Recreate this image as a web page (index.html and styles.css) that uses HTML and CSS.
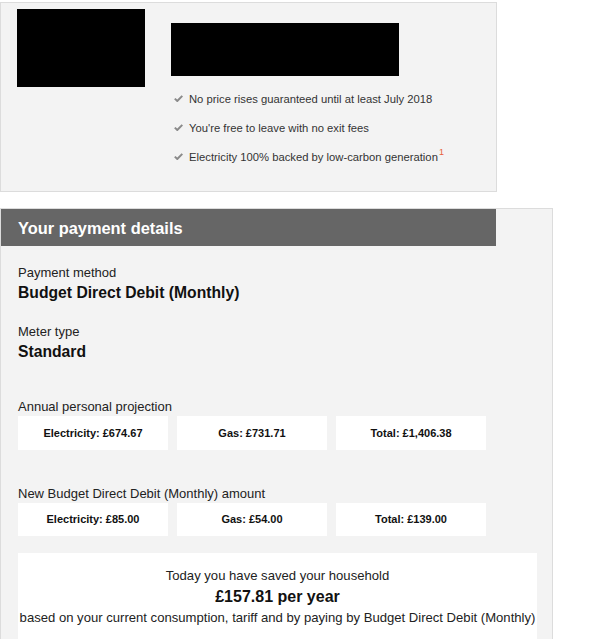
FILE: index.html
```html
<!DOCTYPE html>
<html lang="en">
<head>
  <meta charset="UTF-8">
  <meta name="viewport" content="width=device-width, initial-scale=1">
  <title>Your tariff</title>
  <link rel="stylesheet" href="styles.css">
</head>
<body>
  <div class="tariff-card">
    <div class="tariff-logo"></div>
    <div class="tariff-info">
      <div class="tariff-name"></div>
      <ul class="ticks">
        <li><svg class="tick" viewBox="0 0 9 7"><path d="M0.8 3.6 L3.3 6 L8.3 0.9" /></svg>No price rises guaranteed until at least July 2018</li>
        <li><svg class="tick" viewBox="0 0 9 7"><path d="M0.8 3.6 L3.3 6 L8.3 0.9" /></svg>You're free to leave with no exit fees</li>
        <li><svg class="tick" viewBox="0 0 9 7"><path d="M0.8 3.6 L3.3 6 L8.3 0.9" /></svg>Electricity 100% backed by low-carbon generation<sup>1</sup></li>
      </ul>
    </div>
  </div>

  <div class="payment-card">
    <h2 class="payment-title">Your payment details</h2>
    <div class="payment-body">
      <div class="field">
        <p class="field-label">Payment method</p>
        <p class="field-value">Budget Direct Debit (Monthly)</p>
      </div>
      <div class="field meter">
        <p class="field-label">Meter type</p>
        <p class="field-value">Standard</p>
      </div>

      <p class="field-label projection">Annual personal projection</p>
      <div class="amounts">
        <div class="amount tall">Electricity: £674.67</div>
        <div class="amount tall">Gas: £731.71</div>
        <div class="amount tall">Total: £1,406.38</div>
      </div>

      <p class="field-label monthly">New Budget Direct Debit (Monthly) amount</p>
      <div class="amounts">
        <div class="amount">Electricity: £85.00</div>
        <div class="amount">Gas: £54.00</div>
        <div class="amount">Total: £139.00</div>
      </div>

      <div class="savings">
        <p>Today you have saved your household</p>
        <p class="saved">£157.81 per year</p>
        <p>based on your current consumption, tariff and by paying by Budget Direct Debit (Monthly)</p>
      </div>
    </div>
  </div>
</body>
</html>
```

FILE: styles.css
```css
*{
  padding: 0;
  margin: 0;
  box-sizing: border-box;
}
body{
  background: #fff;
  color: #222;
  font-family: "Liberation Sans", Arial, sans-serif;
  overflow: hidden;
}
.tariff-card{
  display: flex;
  width: 497px;
  margin-top: 2px;
  padding: 6px 0 20px 16px;
  background: #f3f3f3;
  border: 1px solid #dcdcdc;
}
.tariff-logo{
  width: 128px;
  height: 78px;
  background: #000;
}
.tariff-info{
  margin-left: 26px;
  padding-top: 14px;
}
.tariff-name{
  width: 228px;
  height: 53px;
  background: #000;
}
.ticks{
  list-style: none;
  margin-top: 8px;
  font-size: 11.25px;
  color: #333;
}
.ticks li{
  display: flex;
  align-items: center;
  height: 29px;
  padding-left: 3px;
}
.tick{
  width: 9px;
  height: 7px;
  margin-right: 6px;
  fill: none;
  stroke: #8a8a8a;
  stroke-width: 2;
}
.ticks sup{
  color: #e8603c;
  font-size: 9px;
  align-self: flex-start;
  margin-top: 6px;
  margin-left: 1px;
  line-height: 1;
}

.payment-card{
  width: 553px;
  height: 431px;
  margin-top: 16px;
  background: #f3f3f3;
  border: 1px solid #dcdcdc;
  border-bottom: none;
}
.payment-title{
  width: 495px;
  height: 37px;
  padding-left: 17px;
  background: #666;
  color: #fff;
  font-size: 16.4px;
  line-height: 38px;
  font-weight: bold;
}
.payment-body{
  padding: 18px 0 0 17px;
}
.field-label{
  font-size: 13px;
  line-height: 17px;
  color: #222;
}
.field-value{
  margin-top: 2px;
  font-size: 15.7px;
  line-height: 20px;
  font-weight: bold;
  color: #111;
}
.meter{
  margin-top: 20px;
}
.projection{
  margin-top: 36px;
}
.monthly{
  margin-top: 35px;
}
.amounts{
  display: grid;
  grid-template-columns: repeat(3, 1fr);
  gap: 9px;
  width: 468px;
  margin-top: 1px;
}
.amount{
  height: 33px;
  background: #fff;
  text-align: center;
  font-size: 11px;
  font-weight: bold;
  line-height: 33px;
  color: #111;
}
.amount.tall{
  height: 34px;
  line-height: 34px;
}
.savings{
  width: 519px;
  height: 100px;
  margin-top: 17px;
  padding-top: 12px;
  background: #fff;
  text-align: center;
  font-size: 13.1px;
  line-height: 21px;
  color: #222;
}
.savings .saved{
  font-size: 16px;
  font-weight: bold;
  color: #111;
}
```
